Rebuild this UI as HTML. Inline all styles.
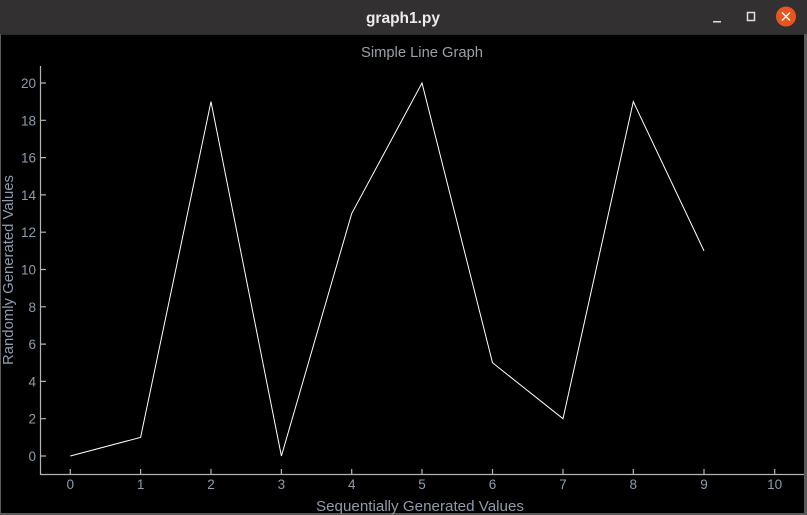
<!DOCTYPE html>
<html><head><style>
body{margin:0;width:807px;height:515px;overflow:hidden;background:#000;font-family:"Liberation Sans",sans-serif}
</style></head><body>
<svg width="807" height="515" xmlns="http://www.w3.org/2000/svg" style="position:absolute;left:0;top:0">
<rect x="0" y="0" width="807" height="515" fill="#000"/>
<rect x="0" y="0" width="807" height="34" fill="#323031"/>
<rect x="0" y="34" width="807" height="1" fill="#262626"/>
<rect x="0" y="34" width="1" height="481" fill="#5a5a5a"/>
<rect x="804" y="34" width="3" height="481" fill="#5a5a5a"/>
<rect x="0" y="513" width="807" height="2" fill="#5a5a5a"/>
<text x="403" y="23" text-anchor="middle" fill="#ececec" font-size="15.5" font-weight="bold">graph1.py</text>
<rect x="713" y="21" width="8" height="1.5" fill="#e0e0e0"/>
<rect x="747.5" y="12.5" width="7" height="8" fill="none" stroke="#e0e0e0" stroke-width="1.5"/>
<circle cx="786" cy="16.5" r="10" fill="#e9541f"/>
<path d="M782 12.5 L790 20.5 M790 12.5 L782 20.5" stroke="#fff" stroke-width="1.5"/>
<text x="422" y="57" text-anchor="middle" fill="#9aa0a8" font-size="14.5" textLength="122" lengthAdjust="spacingAndGlyphs">Simple Line Graph</text>
<g stroke="#b4b4b4" stroke-width="1.2" fill="none">
<path d="M40.5 66 V474.5 H804"/>
<path d="M40 456 H46 M40 418.7 H46 M40 381.4 H46 M40 344.1 H46 M40 306.8 H46 M40 269.5 H46 M40 232.2 H46 M40 194.9 H46 M40 157.6 H46 M40 120.3 H46 M40 83 H46"/>
<path d="M70.3 474 V469 M140.6 474 V469 M211 474 V469 M281.4 474 V469 M351.7 474 V469 M422 474 V469 M492.5 474 V469 M563 474 V469 M633.3 474 V469 M704 474 V469 M774.7 474 V469"/>
</g>
<g fill="#8e9cab" font-size="13.5" text-anchor="end">
<text x="36" y="461">0</text><text x="36" y="423.7">2</text><text x="36" y="386.4">4</text><text x="36" y="349.1">6</text><text x="36" y="311.8">8</text><text x="36" y="274.5">10</text><text x="36" y="237.2">12</text><text x="36" y="199.9">14</text><text x="36" y="162.6">16</text><text x="36" y="125.3">18</text><text x="36" y="88">20</text>
</g>
<g fill="#8e9cab" font-size="13.5" text-anchor="middle">
<text x="70.3" y="489">0</text><text x="140.6" y="489">1</text><text x="211" y="489">2</text><text x="281.4" y="489">3</text><text x="351.7" y="489">4</text><text x="422" y="489">5</text><text x="492.5" y="489">6</text><text x="563" y="489">7</text><text x="633.3" y="489">8</text><text x="704" y="489">9</text><text x="774.7" y="489">10</text>
</g>
<text x="420" y="511" text-anchor="middle" fill="#8e9cab" font-size="15" textLength="208" lengthAdjust="spacingAndGlyphs">Sequentially Generated Values</text>
<text transform="translate(13,270) rotate(-90)" text-anchor="middle" fill="#8e9cab" font-size="15" textLength="190" lengthAdjust="spacingAndGlyphs">Randomly Generated Values</text>
<polyline fill="none" stroke="#fff" stroke-width="1" points="70.3,456 140.6,437.35 211,101.65 281.4,456 351.7,213.55 422,83 492.5,362.75 563,418.7 633.3,101.65 704,250.85"/>
</svg>
</body></html>
